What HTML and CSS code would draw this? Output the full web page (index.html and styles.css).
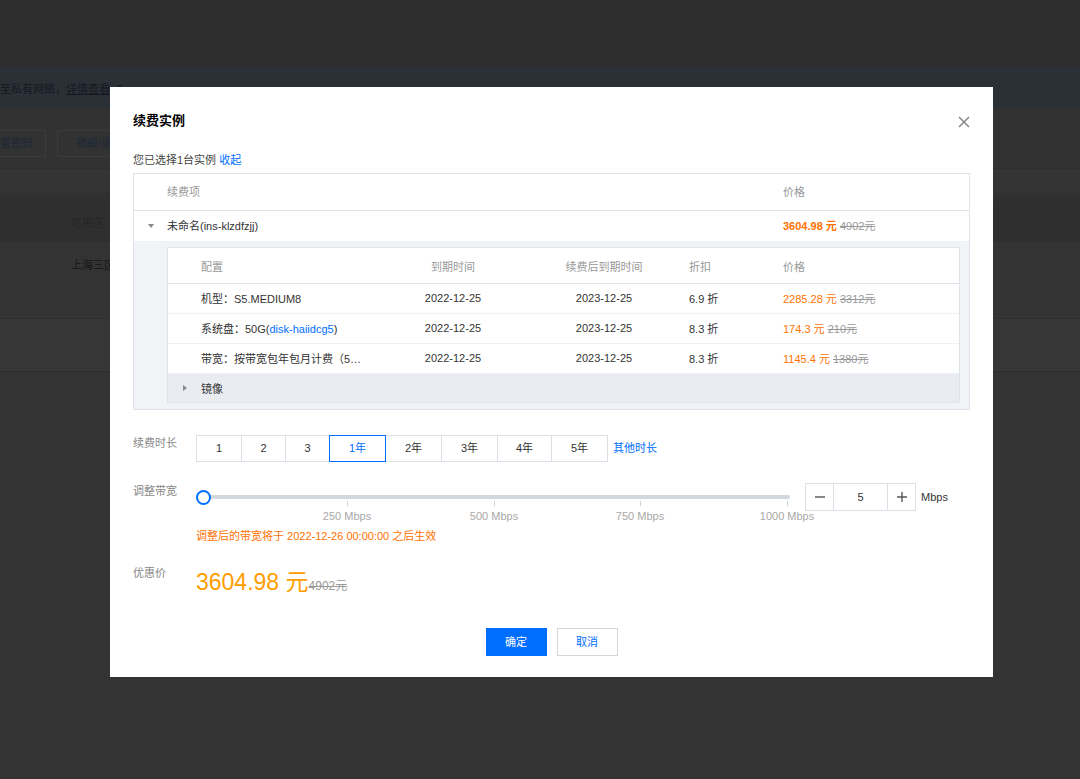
FILE: index.html
```html
<!DOCTYPE html>
<html lang="zh-CN">
<head>
<meta charset="utf-8">
<title>续费实例</title>
<link rel="stylesheet" href="styles.css">
</head>
<body>
<div class="page">
  <div class="topbar"></div>
  <div class="notice"><span>至私有网络，</span><span class="notice-link">详情查看</span><span class="notice-icon">↗</span></div>
  <div class="toolbar">
    <span class="bg-btn bg-btn-a">置密码</span>
    <span class="bg-btn bg-btn-b">销毁/退还</span>
  </div>
  <div class="band-a"></div>
  <div class="band-b"></div>
  <div class="bg-thead"><span class="bg-cell bg-cell-head">可用区</span></div>
  <div class="bg-row"><span class="bg-cell">上海三区</span></div>
  <div class="bg-row2"></div>
</div>

<div class="modal">
  <svg class="modal-close" width="12" height="12" viewBox="0 0 12 12"><path d="M1 1L11 11M11 1L1 11" stroke="#888" stroke-width="1.5" fill="none"/></svg>
  <div class="modal-title">续费实例</div>
  <div class="selected">您已选择1台实例 <span class="link">收起</span></div>

  <div class="otable">
    <div class="ot-head">
      <div class="ot-c1">续费项</div>
      <div class="ot-c2">价格</div>
    </div>
    <div class="ot-row">
      <div class="ot-c1 ot-c1-row"><span class="arrow-box"><span class="tri-down"></span></span>未命名(ins-klzdfzjj)</div>
      <div class="ot-c2"><span class="price-b">3604.98 元</span> <span class="old">4902元</span></div>
    </div>
    <div class="ot-expand">
      <div class="itable">
        <div class="it-head it-grid">
          <div class="c1">配置</div>
          <div class="c2">到期时间</div>
          <div class="c3">续费后到期时间</div>
          <div class="c4">折扣</div>
          <div class="c5">价格</div>
        </div>
        <div class="it-row it-grid">
          <div class="c1">机型：S5.MEDIUM8</div>
          <div class="c2">2022-12-25</div>
          <div class="c3">2023-12-25</div>
          <div class="c4">6.9 折</div>
          <div class="c5"><span class="price">2285.28 元</span> <span class="old">3312元</span></div>
        </div>
        <div class="it-row it-grid">
          <div class="c1">系统盘：50G(<span class="link">disk-haiidcg5</span>)</div>
          <div class="c2">2022-12-25</div>
          <div class="c3">2023-12-25</div>
          <div class="c4">8.3 折</div>
          <div class="c5"><span class="price">174.3 元</span> <span class="old">210元</span></div>
        </div>
        <div class="it-row it-grid">
          <div class="c1">带宽：按带宽包年包月计费（5…</div>
          <div class="c2">2022-12-25</div>
          <div class="c3">2023-12-25</div>
          <div class="c4">8.3 折</div>
          <div class="c5"><span class="price">1145.4 元</span> <span class="old">1380元</span></div>
        </div>
        <div class="it-mirror"><span class="arrow-box"><span class="tri-right"></span></span>镜像</div>
      </div>
    </div>
  </div>

  <div class="form-row row-duration">
    <div class="form-label">续费时长</div>
    <div class="seg">
      <span class="seg-item w46">1</span>
      <span class="seg-item w45">2</span>
      <span class="seg-item w45">3</span>
      <span class="seg-item w57 active">1年</span>
      <span class="seg-item w57">2年</span>
      <span class="seg-item w57">3年</span>
      <span class="seg-item w55">4年</span>
      <span class="seg-item w57">5年</span>
    </div>
    <span class="link other">其他时长</span>
  </div>

  <div class="form-row row-bw">
    <div class="form-label">调整带宽</div>
    <div class="slider">
      <div class="track"></div>
      <span class="handle"></span>
      <span class="tick t1"></span><span class="tick t2"></span><span class="tick t3"></span><span class="tick t4"></span>
      <span class="tick-label t1">250 Mbps</span>
      <span class="tick-label t2">500 Mbps</span>
      <span class="tick-label t3">750 Mbps</span>
      <span class="tick-label t4">1000 Mbps</span>
    </div>
    <div class="num">
      <span class="num-btn num-minus"><svg width="10" height="10" viewBox="0 0 10 10"><path d="M0 5H10" stroke="#555" stroke-width="1.4"/></svg></span>
      <span class="num-val">5</span>
      <span class="num-btn num-plus"><svg width="10" height="10" viewBox="0 0 10 10"><path d="M0 5H10M5 0V10" stroke="#555" stroke-width="1.4"/></svg></span>
    </div>
    <span class="unit">Mbps</span>
  </div>
  <div class="note">调整后的带宽将于 2022-12-26 00:00:00 之后生效</div>

  <div class="form-row row-price">
    <div class="form-label">优惠价</div>
    <div class="big-price">3604.98 元<span class="old old-big">4902元</span></div>
  </div>

  <div class="footer">
    <span class="btn btn-primary">确定</span>
    <span class="btn btn-default">取消</span>
  </div>
</div>
</body>
</html>
```

FILE: styles.css
```css
* { box-sizing: border-box; }
html, body { margin: 0; padding: 0; }
body {
  width: 1080px;
  height: 779px;
  overflow: hidden;
  background: #333333;
  font-family: "Liberation Sans", "Noto Sans CJK SC", sans-serif;
  font-size: 11px;
  color: #333;
  position: relative;
}

/* background page (dimmed) */
.page { width: 1080px; }
.topbar { height: 67px; background: #2d2d2d; }
.notice {
  height: 41px;
  background: #2b2f36;
  line-height: 44px;
  color: #15191f;
  white-space: nowrap;
}
.notice-link { text-decoration: underline; }
.notice-icon { margin-left: 2px; }
.toolbar {
  height: 60px;
  background: #323232;
  padding-top: 22px;
  display: flex;
  white-space: nowrap;
}
.bg-btn {
  height: 27px;
  line-height: 25px;
  border: 1px solid #3b3b3b;
  color: #1d2738;
  font-size: 11px;
}
.bg-btn-a { width: 46px; border-left: none; padding-left: 0; }
.bg-btn-b { width: 110px; margin-left: 11px; padding-left: 18px; }
.band-a { height: 25px; background: #343434; border-top: 1px solid #2e2e2e; }
.band-b { height: 10px; background: #303030; }
.bg-thead { height: 39px; background: #2f2f2f; padding-left: 71px; line-height: 40px; }
.bg-row { height: 77px; background: #333; padding-left: 71px; padding-top: 14px; border-bottom: 1px solid #2e2e2e; }
.bg-row2 { height: 53px; background: #363636; border-bottom: 1px solid #2c2c2c; }
.bg-cell { color: #151515; font-size: 11px; }
.bg-cell-head { color: #252525; }

/* modal */
.modal {
  position: absolute;
  left: 110px;
  top: 87px;
  width: 883px;
  height: 590px;
  background: #fff;
  padding: 24px 23px 0 23px;
}
.modal-close { position: absolute; right: 23px; top: 29px; }
.modal-title { font-size: 13px; font-weight: bold; line-height: 20px; color: #000; }
.selected { margin-top: 21px; line-height: 16px; color: #444; }
.link { color: #006eff; }

.otable { margin-top: 5px; border: 1px solid #dfe3ea; }
.ot-head, .ot-row { display: grid; grid-template-columns: 649px 1fr; }
.ot-head { height: 37px; line-height: 37px; border-bottom: 1px solid #dfe3ea; color: #999; }
.ot-head .ot-c1 { padding-left: 33px; }
.ot-row { height: 30px; line-height: 30px; color: #333; }
.ot-c1-row { display: flex; align-items: center; }
.arrow-box { width: 33px; display: inline-flex; justify-content: center; align-items: center; height: 10px; }
.tri-down { width: 0; height: 0; border-left: 3.5px solid transparent; border-right: 3.5px solid transparent; border-top: 4px solid #888; }
.tri-right { width: 0; height: 0; border-top: 3.5px solid transparent; border-bottom: 3.5px solid transparent; border-left: 4px solid #888; }
.price-b { color: #ff7200; font-weight: bold; }
.price { color: #ff7200; }
.old { color: #999; text-decoration: line-through; }

.ot-expand { background: #f2f3f7; padding: 6px 9px 6px 33px; }
.itable { background: #fff; border: 1px solid #dfe3ea; }
.it-grid { display: grid; grid-template-columns: 225px 120px 170px 94px 1fr; align-items: center; }
.it-grid .c1 { padding-left: 33px; white-space: nowrap; }
.it-grid .c2 { text-align: center; }
.it-grid .c3 { padding-left: 12px; text-align: center; }
.it-grid .c4 { padding-left: 6px; }
.it-grid .c5 { padding-left: 6px; }
.it-head { height: 36px; border-bottom: 1px solid #dfe3ea; color: #999; }
.it-row { height: 30px; border-bottom: 1px solid #eff1f4; color: #333; padding-bottom: 1px; }
.it-mirror { height: 28px; background: #e9ecf1; display: flex; align-items: center; color: #333; }

/* form */
.form-row { display: flex; align-items: flex-start; }
.form-label { width: 63px; flex: none; color: #888; line-height: 16px; }
.row-duration { margin-top: 25px; }
.seg { display: flex; }
.seg-item {
  height: 27px;
  line-height: 25px;
  border: 1px solid #dcdfe6;
  text-align: center;
  color: #333;
  margin-left: -1px;
  background: #fff;
}
.seg-item:first-child { margin-left: 0; }
.seg-item.active { border-color: #006eff; color: #006eff; position: relative; z-index: 1; }
.w46 { width: 46px; } .w45 { width: 45px; } .w57 { width: 57px; } .w55 { width: 55px; }
.other { margin-left: 5px; line-height: 27px; }

.row-bw { margin-top: 21px; }
.slider { position: relative; width: 598px; height: 39px; flex: none; }
.track { margin-top: 12px; margin-left: 7px; width: 587px; height: 4px; background: #d3d8e0; border-radius: 2px; }
.handle {
  position: absolute; left: 0; top: 7px;
  width: 15px; height: 15px; border-radius: 50%;
  border: 2px solid #006eff; background: #fff;
}
.tick { position: absolute; top: 18px; width: 1px; height: 5px; background: #cfd3da; }
.tick-label { position: absolute; top: 27px; line-height: 12px; font-size: 11px; color: #a8a8a8; transform: translateX(-50%); white-space: nowrap; }
.t1 { left: 151px; } .t2 { left: 298px; } .t3 { left: 444px; } .t4 { left: 591px; }

.num { margin-left: 11px; width: 111px; height: 28px; border: 1px solid #dcdfe6; display: flex; flex: none; }
.num-btn { width: 28px; display: flex; align-items: center; justify-content: center; }
.num-minus { border-right: 1px solid #dcdfe6; }
.num-plus { border-left: 1px solid #dcdfe6; }
.num-val { flex: 1; text-align: center; line-height: 26px; color: #333; }
.unit { margin-left: 5px; line-height: 28px; color: #333; }

.note { margin-top: 7px; margin-left: 63px; line-height: 14px; color: #ff7200; }

.row-price { margin-top: 22px; }
.big-price { margin-top: 2px; font-size: 23px; line-height: 30px; color: #ff9d00; white-space: nowrap; }
.old-big { font-size: 12px; }

.footer { margin-top: 27px; display: flex; justify-content: center; gap: 10px; }
.btn { width: 61px; height: 28px; line-height: 26px; text-align: center; border: 1px solid transparent; }
.btn-primary { background: #006eff; border-color: #006eff; color: #fff; }
.btn-default { background: #fff; border-color: #d3d8e0; color: #006eff; }
```
